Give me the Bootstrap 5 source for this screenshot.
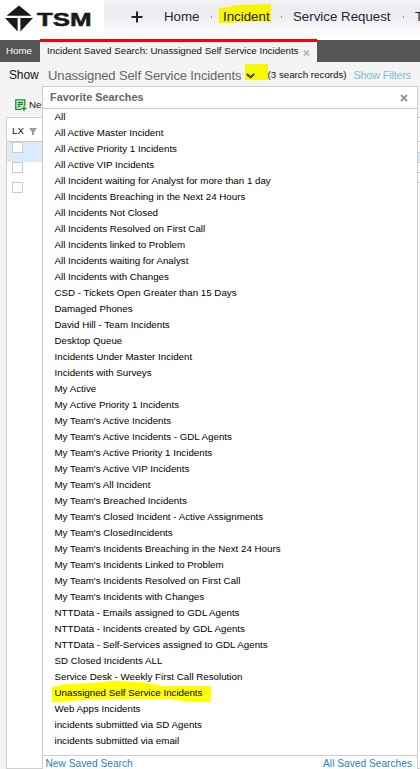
<!DOCTYPE html>
<html lang="en">
<head>
<meta charset="utf-8">
<meta name="viewport" content="width=device-width, initial-scale=1">
<title>TSM - Incident Saved Search</title>
<link href="https://cdn.jsdelivr.net/npm/bootstrap@5.3.0/dist/css/bootstrap.min.css" rel="stylesheet">
<style>
html, body { height: 769px; overflow: hidden; }
body { font-family: "Liberation Sans", Arial, sans-serif; font-size: 9.75px; line-height: 16px; color: #111; background: #f4f4f4; }
svg { display: block; flex: none; }
a { text-decoration: none; }
.top-nav { height: 40px; background: linear-gradient(#f2f2f4 0, #ebebf0 12px, #f6f6f9 26px, #fff 38px); font-size: 13.3px; }
.brand-box { width: 104px; height: 38px; background: #fff; padding: 5px 0 0 5px; }
.brand-name { font-weight: 700; font-size: 18.5px; line-height: 20px; color: #1a1a1a; transform-origin: 0 50%; transform: scaleX(1.4); -webkit-text-stroke: .5px #1a1a1a; margin: 5px 0 0 3.500px; }
.plus { margin: 11px 21px 0 27px; }
.top-nav .nav-link { color: #1f2430; padding: 0; line-height: 33px; white-space: nowrap; flex: none; }
.dot { width: 1px; height: 2px; background: #999; margin: 16px 11px 0 0; flex: none; }
.marked { position: relative; }
.marked > svg { position: absolute; z-index: 0; }
.marked > span { position: relative; z-index: 1; }
.mark-nav { left: -4px; top: 4px; }
.mark-item { left: -3px; top: -4px; }
.tab-strip { height: 22px; background: #555; }
.tab-home { width: 40px; color: #fff; padding-left: 6px; line-height: 22px; }
.tab-open { width: 277px; height: 23px; margin-top: -1px; border-top: 3px solid #f00; background: #f4f4f4; padding-left: 7px; line-height: 18px; white-space: nowrap; }
.tab-text { width: 256px; }
.show-row { height: 24px; white-space: nowrap; padding-left: 9px; }
.show-label { font-size: 12px; line-height: 26px; width: 39px; letter-spacing: -.15px; }
.show-title { font-size: 13px; line-height: 27px; color: #666; width: 197px; letter-spacing: -.12px; }
.caret-box { width: 22.500px; height: 16px; margin-top: 2px; background: #f8f800; padding: 9px 0 0 1px; }
.count { line-height: 26px; width: 86px; }
.filters { font-size: 10.7px; line-height: 26px; color: #79bdd8; letter-spacing: -.1px; }
.toolbar { height: 31px; padding: 13px 0 0 15px; }
.grid-panel { margin-left: 6px; height: 652px; background: #fff; border: 1px solid #d0d0d0; border-right: 0; }
.grid-head { height: 24px; border-bottom: 1px solid #c8c8c8; padding: 0 5px; line-height: 26px; }
.grid-line { height: 20px; border-bottom: 1px solid transparent; padding-left: 5px; }
.grid-line.current { background: #dcebfa; }
.tick { width: 11px; height: 11px; border: 1px solid #ccc; background: #fff; }
.edge { position: absolute; right: 0; top: 117px; width: 2px; height: 86px; background: #fff; }
.edge div { border-top: 1px solid #ccc; height: 10px; }
.edge div:first-child { height: 24px; }
.edge div:nth-child(2) { height: 11px; }
.edge div:nth-child(3) { background: #dcebfa; }
.fav-menu { position: absolute; left: 42px; top: 86px; width: 376px; height: 690px; background: #fff; border: 1px solid #ccc; }
.fav-head { height: 22px; border-bottom: 1px solid #ccc; padding: 0 9px 0 7px; }
.fav-head strong { font-size: 10.8px; line-height: 21px; color: #666; letter-spacing: .03px; }
.fav-list { padding: 0 0 0 11.500px; margin: 0; height: 646px; color: #000; }
.fav-list li { height: 16px; line-height: 16px; white-space: nowrap; }
.fav-foot { border-top: 1px solid #ccc; padding: 0 5px 0 2.500px; font-size: 10.2px; line-height: 15px; }
.fav-foot a { color: #2a82bd; }
</style>
<script src="https://cdn.jsdelivr.net/npm/bootstrap@5.3.0/dist/js/bootstrap.bundle.min.js"></script>
</head>
<body class="position-relative">
<header class="top-nav d-flex overflow-hidden">
  <div class="brand-box d-flex flex-shrink-0">
    <svg width="28" height="28" viewBox="0 0 28 28"><g fill="#1a1a1a"><path d="M14 .5 26.500 10.800H1.500z"/><path d="M0 13h12.600V26.500z"/><path d="M28 13H15.400V26.500z"/></g></svg>
    <div class="brand-name">TSM</div>
  </div>
  <svg class="plus" width="12" height="12" viewBox="0 0 12 12"><path d="M6 .5v11M.5 6h11" stroke="#222531" stroke-width="2"/></svg>
  <a class="nav-link" href="#" style="width:47px">Home</a>
  <i class="dot"></i>
  <a class="nav-link marked" href="#" style="width:58px"><svg class="mark-nav" width="54" height="20" viewBox="0 0 54 20"><path fill="#f6f600" d="M0 4 10 3 17 1 52 0v18L40 17 17 18 13 19H0z"/></svg><span>Incident</span></a>
  <i class="dot"></i>
  <a class="nav-link" href="#" style="width:110px">Service Request</a>
  <i class="dot"></i>
  <a class="nav-link" href="#">T</a>
</header>
<nav class="tab-strip d-flex">
  <div class="tab-home">Home</div>
  <div class="tab-open d-flex"><div class="tab-text">Incident Saved Search: Unassigned Self Service Incidents</div>
    <svg class="mt-2" width="7" height="7" viewBox="0 0 7 7"><path d="m1 .5 5 5M6 .5l-5 5" stroke="#bbb" stroke-width="1.800"/></svg></div>
</nav>
<div class="show-row d-flex">
  <div class="show-label">Show</div>
  <div class="show-title">Unassigned Self Service Incidents</div>
  <div class="caret-box"><svg width="9" height="6" viewBox="0 0 9 6"><path d="m.8 1 3.700 3.300L8.200 1" fill="none" stroke="#444400" stroke-width="2"/></svg></div>
  <div class="count">(3 search records)</div>
  <a class="filters" href="#">Show Filters</a>
</div>
<div class="toolbar d-flex">
  <svg width="12" height="12" viewBox="0 0 12 12"><path d="M6.500 10.300H.8V.8h9v6M2.500 3.500h5.800M2.500 5.500h5.800M2.500 7.500h3M9 7v5M6.500 9.500h5" fill="none" stroke="#159032" stroke-width="1.300"/></svg>
  <span style="margin:-2px 0 0 2px">Ne</span>
</div>
<main class="grid-panel">
  <div class="grid-head d-flex"><span style="width:17px">LX</span><svg width="8" height="7" viewBox="0 0 8 7" style="margin-top:10px"><path d="M0 0h8L5 4v3H3V4z" fill="#999"/></svg></div>
  <div class="grid-line current"><div class="tick"></div></div>
  <div class="grid-line"><div class="tick"></div></div>
  <div class="grid-line"><div class="tick"></div></div>
</main>
<section class="fav-menu">
  <div class="fav-head d-flex justify-content-between"><strong>Favorite Searches</strong>
    <svg width="8" height="8" viewBox="0 0 8 8" style="margin-top:7px"><path d="m1 1 6 6M7 1 1 7" stroke="#999" stroke-width="2"/></svg></div>
  <ul class="fav-list list-unstyled">
    <li>All</li><li>All Active Master Incident</li><li>All Active Priority 1 Incidents</li><li>All Active VIP Incidents</li><li>All Incident waiting for Analyst for more than 1 day</li><li>All Incidents Breaching in the Next 24 Hours</li><li>All Incidents Not Closed</li><li>All Incidents Resolved on First Call</li><li>All Incidents linked to Problem</li><li>All Incidents waiting for Analyst</li><li>All Incidents with Changes</li><li>CSD - Tickets Open Greater than 15 Days</li><li>Damaged Phones</li><li>David Hill - Team Incidents</li><li>Desktop Queue</li><li>Incidents Under Master Incident</li><li>Incidents with Surveys</li><li>My Active</li><li>My Active Priority 1 Incidents</li><li>My Team's Active Incidents</li><li>My Team's Active Incidents - GDL Agents</li><li>My Team's Active Priority 1 Incidents</li><li>My Team's Active VIP Incidents</li><li>My Team's All Incident</li><li>My Team's Breached Incidents</li><li>My Team's Closed Incident - Active Assignments</li><li>My Team's ClosedIncidents</li><li>My Team's Incidents Breaching in the Next 24 Hours</li><li>My Team's Incidents Linked to Problem</li><li>My Team's Incidents Resolved on First Call</li><li>My Team's Incidents with Changes</li><li>NTTData - Emails assigned to GDL Agents</li><li>NTTData - Incidents created by GDL Agents</li><li>NTTData - Self-Services assigned to GDL Agents</li><li>SD Closed Incidents ALL</li><li>Service Desk - Weekly First Call Resolution</li>
    <li class="marked"><svg class="mark-item" width="160" height="22" viewBox="0 0 160 22"><path fill="#ff0" d="M0 6 14 3 40 2 60 0 90 1 112 5 159 5V21H136L118 18H68L30 19 10 21H0z"/></svg><span>Unassigned Self Service Incidents</span></li>
    <li>Web Apps Incidents</li><li>incidents submitted via SD Agents</li><li>incidents submitted via email</li>
  </ul>
  <div class="fav-foot d-flex justify-content-between"><a href="#">New Saved Search</a><a href="#">All Saved Searches</a></div>
</section>
<div class="edge"><div></div><div></div><div></div><div></div><div></div><div></div></div>
</body>
</html>
